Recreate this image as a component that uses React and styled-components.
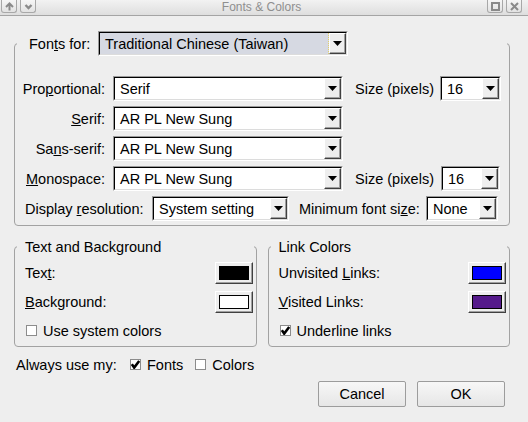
import React from 'react';
import styled, { createGlobalStyle } from 'styled-components';

const GlobalStyle = createGlobalStyle`
  html, body {
    margin: 0;
    padding: 0;
    background: #eeeeee;
  }
  body {
    font-family: 'Liberation Sans', Arial, sans-serif;
    font-size: 14.5px;
    color: #000;
  }
`;

const TitleBarIcon = ({ kind }) => (
  <svg width='13' height='11' viewBox='0 0 13 11'>
    {kind === 'up' && (
      <path d='M6.5 9.5 V2.5 M3 6 L6.5 2.5 L10 6' fill='none' stroke='#8a8a8a' strokeWidth='2' />
    )}
    {kind === 'down' && (
      <path d='M3.5 4 L6.5 7 L9.5 4' fill='none' stroke='#8a8a8a' strokeWidth='2.4' />
    )}
    {kind === 'max' && <rect x='3' y='2' width='7' height='7' fill='none' stroke='#8a8a8a' strokeWidth='2' />}
    {kind === 'close' && (
      <path d='M3 2 L10 9 M10 2 L3 9' fill='none' stroke='#8a8a8a' strokeWidth='2' />
    )}
  </svg>
);

const DownArrow = () => (
  <svg width='9' height='5' viewBox='0 0 9 5'>
    <polygon points='0,0 9,0 4.5,5' fill='#000' />
  </svg>
);

const Tick = () => (
  <svg width='9' height='9' viewBox='0 0 9 9'>
    <path d='M0.8 4.2 L3.2 7.6 L8.2 1' fill='none' stroke='#000' strokeWidth='2.6' />
  </svg>
);

const ComboBox = ({ width, value, focus }) => (
  <Combo $w={width}>
    <ComboInner>
      <ComboValue $focus={focus}>{value}</ComboValue>
      <ComboArrow>
        <DownArrow />
      </ComboArrow>
    </ComboInner>
  </Combo>
);

const ColorButton = ({ color }) => (
  <SwatchButton>
    <Swatch $color={color} />
  </SwatchButton>
);

const CheckItem = ({ checked, children, ml }) => (
  <CheckLabel $ml={ml}>
    <CheckBox>{checked && <Tick />}</CheckBox>
    {children}
  </CheckLabel>
);

const App = () => (
  <>
    <GlobalStyle />
    <Window>
      <TitleBar>
        <TitleButtons>
          <TitleButton><TitleBarIcon kind='up' /></TitleButton>
          <TitleButton><TitleBarIcon kind='down' /></TitleButton>
        </TitleButtons>
        <TitleText>Fonts &amp; Colors</TitleText>
        <TitleButtons $right>
          <TitleButton><TitleBarIcon kind='max' /></TitleButton>
          <TitleButton><TitleBarIcon kind='close' /></TitleButton>
        </TitleButtons>
      </TitleBar>

      <Content>
        <Frame $mt={15} $pt={20} $pb={4}>
          <Legend>
            <LegendInner $pl={12} $h={25}>
              <Label $w={60} $left>Fon<u>t</u>s for:</Label>
              <Spacer $w={9} />
              <ComboBox width={250} value='Traditional Chinese (Taiwan)' focus />
            </LegendInner>
          </Legend>
          <Rows>
            <Row>
              <Label $w={90}>Pro<u>p</u>ortional:</Label>
              <ComboBox width={230} value='Serif' />
              <Label $w={77} $ml={4} $left>Size (pixels)</Label>
              <ComboBox width={61} value='16' />
            </Row>
            <Row>
              <Label $w={90}><u>S</u>erif:</Label>
              <ComboBox width={230} value='AR PL New Sung' />
            </Row>
            <Row>
              <Label $w={90}>Sa<u>n</u>s-serif:</Label>
              <ComboBox width={230} value='AR PL New Sung' />
            </Row>
            <Row>
              <Label $w={90}><u>M</u>onospace:</Label>
              <ComboBox width={230} value='AR PL New Sung' />
              <Label $w={78} $ml={4} $left>Size (pixels)</Label>
              <ComboBox width={59} value='16' />
            </Row>
            <Row>
              <Label $w={119} $ml={10} $left>Display <u>r</u>esolution:</Label>
              <ComboBox width={137} value='System setting' />
              <Label $w={119} $ml={2} $left>Minimum font si<u>z</u>e:</Label>
              <ComboBox width={72} value='None' />
            </Row>
          </Rows>
        </Frame>

        <Groups>
          <Frame $grow $pt={7} $pb={7}>
            <Legend>
              <LegendInner $pl={8} $h={17}>Text and Background</LegendInner>
            </Legend>
            <GroupBody>
              <ColorRow>
                <span>Tex<u>t</u>:</span>
                <ColorButton color='#000000' />
              </ColorRow>
              <ColorRow>
                <span><u>B</u>ackground:</span>
                <ColorButton color='#ffffff' />
              </ColorRow>
              <CheckRow>
                <CheckItem ml={1}>Use system colors</CheckItem>
              </CheckRow>
            </GroupBody>
          </Frame>
          <Frame $grow $pt={7} $pb={7}>
            <Legend>
              <LegendInner $pl={8} $h={17}>Link Colors</LegendInner>
            </Legend>
            <GroupBody>
              <ColorRow>
                <span>Unvisited <u>L</u>inks:</span>
                <ColorButton color='#0000ff' />
              </ColorRow>
              <ColorRow>
                <span><u>V</u>isited Links:</span>
                <ColorButton color='#551a8b' />
              </ColorRow>
              <CheckRow>
                <CheckItem ml={1} checked>Underline links</CheckItem>
              </CheckRow>
            </GroupBody>
          </Frame>
        </Groups>

        <AlwaysRow>
          <Label $w={98} $left>Always use my:</Label>
          <CheckItem ml={16} checked>Fonts</CheckItem>
          <CheckItem ml={12}>Colors</CheckItem>
        </AlwaysRow>

        <Footer>
          <PushButton>Cancel</PushButton>
          <PushButton>OK</PushButton>
        </Footer>
      </Content>
    </Window>
  </>
);

export default App;

const Window = styled.div({
  width: 528,
  height: 422,
  overflow: 'hidden',
  background: '#eeeeee',
});

const TitleBar = styled.div({
  display: 'flex',
  alignItems: 'flex-start',
  height: 15,
  borderBottom: '1px solid #a4a4a4',
  background: 'linear-gradient(#f2f2f2, #dedede)',
});

const TitleButtons = styled.div(({ $right }) => ({
  display: 'flex',
  gap: 3,
  padding: $right ? '0 6px 0 0' : '0 0 0 1px',
}));

const TitleButton = styled.div({
  display: 'flex',
  alignItems: 'center',
  justifyContent: 'center',
  width: 14,
  height: 12,
  border: '1px solid #a8a8a8',
  borderTop: 'none',
  borderRadius: '0 0 3px 3px',
  background: 'linear-gradient(#f6f6f6, #e2e2e2)',
});

const TitleText = styled.div({
  flex: 1,
  textAlign: 'center',
  fontSize: 12,
  lineHeight: '15px',
  color: '#8f8f8f',
});

const Content = styled.div({
  padding: '0 18px 0 14px',
});

const Frame = styled.fieldset(({ $mt = 0, $pt = 0, $pb = 0, $grow }) => ({
  margin: `${$mt}px 0 0`,
  padding: `${$pt}px 0 ${$pb}px`,
  border: '1px solid #a2a2a2',
  borderRadius: 4,
  minWidth: 0,
  flex: $grow ? 1 : 'none',
}));

const Legend = styled.legend({
  marginLeft: 2,
  width: 'calc(100% - 4px)',
  padding: 0,
  boxSizing: 'border-box',
});

const LegendInner = styled.div(({ $pl, $h }) => ({
  display: 'flex',
  alignItems: 'center',
  height: $h,
  paddingLeft: $pl,
}));

const Spacer = styled.div(({ $w }) => ({
  width: $w,
  flex: 'none',
}));

const Rows = styled.div({
  display: 'flex',
  flexDirection: 'column',
  gap: 5,
});

const Row = styled.div({
  display: 'flex',
  alignItems: 'center',
  gap: 8,
  height: 25,
});

const Label = styled.span(({ $w, $ml = 0, $left }) => ({
  width: $w,
  marginLeft: $ml,
  textAlign: $left ? 'left' : 'right',
  whiteSpace: 'nowrap',
  flex: 'none',
}));

const Combo = styled.div(({ $w }) => ({
  width: $w,
  height: 25,
  boxSizing: 'border-box',
  flex: 'none',
  border: '1px solid',
  borderColor: '#9a9a9a #ffffff #ffffff #9a9a9a',
}));

const ComboInner = styled.div({
  display: 'flex',
  height: '100%',
  boxSizing: 'border-box',
  borderStyle: 'solid',
  borderWidth: 1,
  borderColor: '#000 #dcdcdc #dcdcdc #000',
  background: '#ffffff',
});

const ComboValue = styled.div(({ $focus }) => ({
  flex: 1,
  display: 'flex',
  alignItems: 'center',
  paddingLeft: 5,
  whiteSpace: 'nowrap',
  overflow: 'hidden',
  background: $focus ? '#d6d9e2' : '#ffffff',
  borderRight: $focus ? '1px dotted #e2cf6a' : 'none',
}));

const ComboArrow = styled.div({
  width: 17,
  flex: 'none',
  display: 'flex',
  alignItems: 'center',
  justifyContent: 'center',
  boxSizing: 'border-box',
  background: '#eeeeee',
  border: '1px solid',
  borderColor: '#ffffff #404040 #404040 #ffffff',
  boxShadow: 'inset -1px -1px 0 #a0a0a0',
});

const Groups = styled.div({
  display: 'flex',
  gap: 11,
  marginTop: 12,
});

const GroupBody = styled.div({
  display: 'flex',
  flexDirection: 'column',
  gap: 7,
  padding: '0 3px 0 10px',
});

const ColorRow = styled.div({
  display: 'flex',
  alignItems: 'center',
  justifyContent: 'space-between',
  height: 22,
});

const SwatchButton = styled.div({
  width: 38,
  height: 22,
  boxSizing: 'border-box',
  padding: 3,
  background: '#eeeeee',
  border: '1px solid',
  borderColor: '#ffffff #404040 #404040 #ffffff',
  boxShadow: 'inset -1px -1px 0 #a0a0a0',
});

const Swatch = styled.div(({ $color }) => ({
  height: '100%',
  boxSizing: 'border-box',
  border: '1px solid #000',
  background: $color,
}));

const CheckRow = styled.div({
  display: 'flex',
  alignItems: 'center',
  height: 17,
  marginTop: 2,
});

const CheckLabel = styled.span(({ $ml = 0 }) => ({
  display: 'inline-flex',
  alignItems: 'center',
  gap: 6,
  marginLeft: $ml,
}));

const CheckBox = styled.span({
  width: 11,
  height: 11,
  boxSizing: 'border-box',
  border: '1px solid #8c8c8c',
  background: '#ffffff',
  display: 'inline-flex',
  alignItems: 'center',
  justifyContent: 'center',
});

const AlwaysRow = styled.div({
  display: 'flex',
  alignItems: 'center',
  height: 17,
  marginTop: 9,
  paddingLeft: 2,
});

const Footer = styled.div({
  display: 'flex',
  justifyContent: 'flex-end',
  gap: 11,
  marginTop: 8,
  paddingRight: 5,
});

const PushButton = styled.button({
  width: 88,
  height: 26,
  padding: 0,
  fontFamily: "'Liberation Sans', Arial, sans-serif",
  fontSize: 14.5,
  color: '#000',
  background: 'linear-gradient(#f7f7f7, #e6e6e6)',
  border: '1px solid #9c9c9c',
  borderRadius: 2,
});
